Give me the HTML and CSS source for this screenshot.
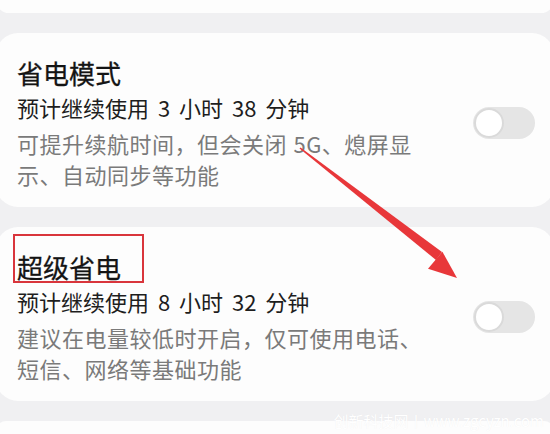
FILE: index.html
```html
<!DOCTYPE html>
<html lang="zh-CN">
<head>
    <meta charset="UTF-8">
    <meta name="viewport" content="width=device-width, initial-scale=1.0">
    <title>省电模式</title>
    <link rel="stylesheet" href="styles.css">
</head>
<body>

<div class="list">
    <div class="card card-top"></div>

    <div class="card">
        <div class="info">
            <div class="title">省电模式</div>
            <div class="estimate">预计继续使用 3 小时 38 分钟</div>
            <div class="desc">可提升续航时间，但会关闭 5G、熄屏显示、自动同步等功能</div>
        </div>
        <div class="toggle"><span class="knob"></span></div>
    </div>

    <div class="card">
        <div class="info">
            <div class="title"><span class="marked">超级省电</span></div>
            <div class="estimate">预计继续使用 8 小时 32 分钟</div>
            <div class="desc">建议在电量较低时开启，仅可使用电话、短信、网络等基础功能</div>
        </div>
        <div class="toggle"><span class="knob"></span></div>
    </div>

    <div class="card card-bottom"></div>
</div>

<!-- 标注箭头 -->
<svg class="arrow" viewBox="0 0 550 434" width="550" height="434">
    <polygon points="299.5,148.5 300.5,147.5 442,252 436,260" fill="#e8373a"/>
    <polygon points="457,278 428,268.7 442.4,251.7" fill="#e8373a"/>
</svg>

<div class="watermark">创新科技网丨www.zgcyzn.com</div>

</body>
</html>
```

FILE: styles.css
```css
body {
    margin: 0;
    height: 434px;
    overflow: hidden;
    background-color: #f0f0f2;
    font-family: "Noto Sans CJK SC", "Noto Sans", sans-serif;
    position: relative;
}
.list {
    display: flex;
    flex-direction: column;
    gap: 19px;
    margin: 0 -4px;
}
.card {
    background: #fdfdfd;
    border-radius: 22px;
    display: flex;
    align-items: center;
    padding: 23px 19px 17px 21px;
}
.card + .card {
    margin-top: 1px;
}
.card-top {
    height: 13px;
    padding: 0;
    border-radius: 0 0 22px 22px;
}
.card-bottom {
    height: 20px;
    padding: 0;
}
.info {
    flex: 1;
}
.title {
    font-size: 26px;
    line-height: 34px;
    font-weight: 400;
    color: #141414;
    -webkit-text-stroke: 0.3px #141414;
}
.marked {
    position: relative;
}
.marked::after {
    content: "";
    position: absolute;
    left: -4px;
    right: -23px;
    top: -14px;
    bottom: 2px;
    border: 2px solid #d9353c;
}
.estimate {
    font-size: 22px;
    line-height: 34px;
    word-spacing: 4px;
    color: #1e1e1e;
}
.desc {
    max-width: 410px;
    margin-top: 4px;
    font-size: 22px;
    letter-spacing: 0.5px;
    word-spacing: 1px;
    line-height: 31px;
    color: #7a7a7a;
}
.toggle {
    width: 62px;
    height: 32px;
    border-radius: 16px;
    background: #e5e5e5;
    display: flex;
    align-items: center;
    padding: 0 1px;
    box-sizing: border-box;
}
.knob {
    width: 26px;
    height: 26px;
    border-radius: 50%;
    background: #fff;
    border: 2px solid #dadada;
}
.arrow {
    position: absolute;
    left: 0;
    top: 0;
}
.watermark {
    position: absolute;
    right: 6px;
    bottom: 3px;
    font-size: 15px;
    color: #fff;
    text-shadow: 0 0 1px rgba(0, 0, 0, 0.06);
}
```
